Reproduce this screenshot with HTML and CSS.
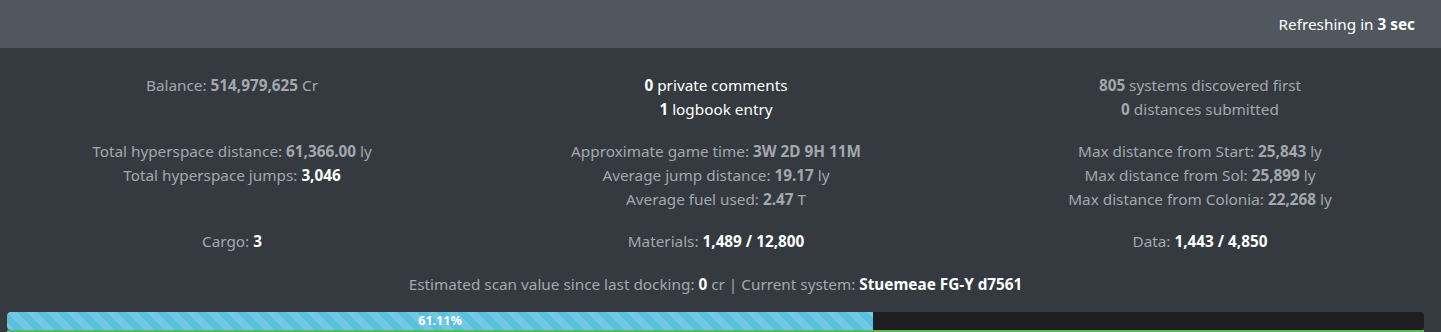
FILE: index.html
```html
<!DOCTYPE html>
<html>
<head>
<meta charset="UTF-8"/>
<title>Commander status</title>
<link rel="stylesheet" href="styles.css">
</head>
<body>
<div class="topbar"><span>Refreshing in <b>3 sec</b></span></div>
<div class="stats">
	<div class="cell">Balance: <b>514,979,625</b> Cr</div>
	<div class="cell white"><b>0</b> private comments<br/><b>1</b> logbook entry</div>
	<div class="cell"><b>805</b> systems discovered first<br/><b>0</b> distances submitted</div>

	<div class="cell">Total hyperspace distance: <b>61,366.00</b> ly<br/>Total hyperspace jumps: <b class="hi">3,046</b></div>
	<div class="cell">Approximate game time: <b>3W 2D 9H 11M</b><br/>Average jump distance: <b>19.17</b> ly<br/>Average fuel used: <b>2.47</b> T</div>
	<div class="cell">Max distance from Start: <b>25,843</b> ly<br/>Max distance from Sol: <b>25,899</b> ly<br/>Max distance from Colonia: <b>22,268</b> ly</div>

	<div class="cell">Cargo: <b class="hi">3</b></div>
	<div class="cell">Materials: <b class="hi">1,489 / 12,800</b></div>
	<div class="cell">Data: <b class="hi">1,443 / 4,850</b></div>
</div>
<div class="scan">Estimated scan value since last docking: <b class="hi">0</b> cr | Current system: <b class="hi">Stuemeae FG-Y d7561</b></div>
<div class="bars">
	<div class="progress"><div class="fill" style="width: 61.11%">61.11%</div></div>
	<div class="progress green"></div>
</div>
</body>
</html>
```
FILE: styles.css
```css
html, body { margin: 0; }
body {
	background: #343a40;
	color: #a3a8ad;
	font-family: 'Noto Sans', 'Open Sans', sans-serif;
	font-size: 15.3px;
	line-height: 24px;
	height: 332px;
	overflow: hidden;
}
b { font-weight: bold; }
.hi, .white { color: #fff; }
.topbar {
	background: #50575e;
	color: #fff;
	height: 48px;
	display: flex; align-items: center; justify-content: flex-end;
	padding: 0 26px 0 0;
}
.stats {
	display: grid;
	grid-template-columns: repeat(3, 1fr);
	row-gap: 18px;
	margin: 25px -1px 0 -10px;
	text-align: center;
}
.scan { text-align: center; margin-top: 19px; padding-right: 10px; }
.bars { margin: 16px 17px 0 7px; }
.progress {
	height: 18px;
	background: #1d1e21;
	border-radius: 4px;
	overflow: hidden;
	display: flex;
}
.fill {
	background-color: #5bc0de;
	background-image: linear-gradient(45deg, rgba(255,255,255,0.15) 25%, transparent 25%,
		transparent 50%, rgba(255,255,255,0.15) 50%, rgba(255,255,255,0.15) 75%, transparent 75%, transparent);
	background-size: 20px 20px;
	color: #fff;
	font-size: 12.5px;
	font-weight: bold;
	line-height: 18px;
	text-align: center;
}
.progress.green { background: #5cb85c; margin-top: 0; border-radius: 0; }
```
